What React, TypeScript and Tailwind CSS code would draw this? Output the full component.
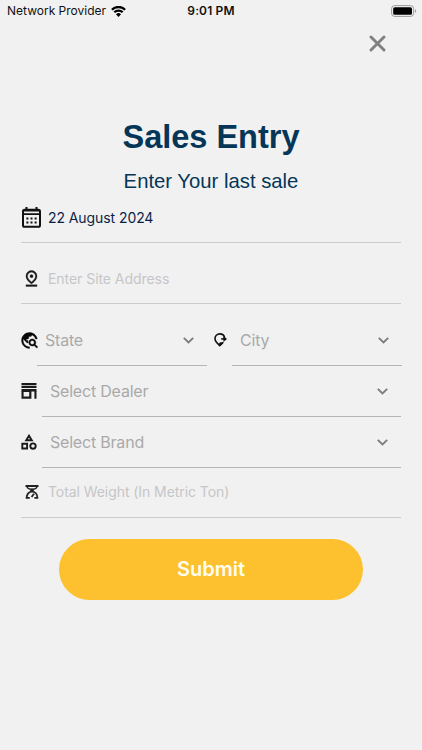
import React from "react";
import { MdOutlinePinDrop, MdTravelExplore } from "react-icons/md";

const sans = "font-['Inter','Liberation_Sans',sans-serif]";
const helv = "font-['Liberation_Sans',Arial,sans-serif]";

function Chevron() {
  return (
    <svg className="mt-[1px] h-[7px] w-[11px] shrink-0" viewBox="0 0 11 7" fill="none" stroke="#7d7d7d" strokeWidth="1.9">
      <path d="M.8 .9 5.5 5.5 10.2 .9" />
    </svg>
  );
}

function CalendarIcon() {
  return (
    <svg className="h-[21px] w-[19px] shrink-0" viewBox="0 0 19 21">
      <path d="M4.5 0v4M14.5 0v4" stroke="#111" strokeWidth="2" />
      <rect x="1" y="2.8" width="17" height="17" rx="1.6" fill="none" stroke="#111" strokeWidth="2" />
      <path d="M1 3.8h17M1 7.1h17" stroke="#111" strokeWidth="1.6" />
      <path d="M4.4 11.5h2M8.5 11.5h2M12.6 11.5h2M4.4 15.6h2M8.5 15.6h2M12.6 15.6h2" stroke="#111" strokeWidth="2" />
    </svg>
  );
}

function CityIcon() {
  return (
    <svg className="h-[14px] w-[13px] shrink-0" viewBox="0 0 13 14" fill="none" stroke="#111" strokeWidth="1.6">
      <path d="M10.6 4.5C10 2.300 8.100 .9 5.900 .9 3 .9 1 3 1 5.800c0 2.600 1.900 4.400 4.700 6.700 1.600-1.100 2.700-2.200 3.500-3.300" />
      <path d="M5.700 13.400 3.800 11.800l2.400-2.600 3.300.2z" fill="#111" stroke="none" />
      <path d="M7.200 5.900h3" />
      <path d="M9.400 2.900 13 5.900 9.400 8.900z" fill="#111" stroke="none" />
    </svg>
  );
}

function StoreIcon() {
  return (
    <svg className="h-[16px] w-[16px] shrink-0" viewBox="0 0 16 16" fill="#1b1b1b">
      <path d="M.5 0h15v2.200H.5zM.5 3.100h15v2H.5zM.5 6h15v2.500H.5z" />
      <path fillRule="evenodd" d="M.5 8h9.900v7.800H.5zM2.600 9v4.600h5.600V9zM13.400 8h2.100v7.800h-2.100z" />
    </svg>
  );
}

function BrandIcon() {
  return (
    <svg className="h-[16px] w-[16px] shrink-0" viewBox="0 0 16 16" fill="none" stroke="#1a1a1a" strokeWidth="1.9">
      <path d="M8 1.700 10.800 6.300H5.200z" />
      <path d="M1.300 9.700h4.800v4.800H1.300z" />
      <circle cx="12" cy="12.100" r="2.700" />
    </svg>
  );
}

function ScaleIcon() {
  return (
    <svg className="h-[14px] w-[14px] shrink-0" viewBox="0 0 14 14" fill="none" stroke="#222">
      <path d="M.5 1h13" strokeWidth="2" />
      <path d="M2 1.500c.3 2.200 2.300 2.700 5 2.700s4.700-.5 5-2.700" strokeWidth="1.5" />
      <path d="M7 3.800v3" strokeWidth="3.600" />
      <path d="M1.600 13.100C1.600 9.200 4 6.700 7 6.700s5.400 2.500 5.400 6.400" strokeWidth="1.800" />
      <path d="M.8 12.900h4M9.400 12.900h3.800" strokeWidth="1.800" />
      <path d="M6.600 12 9 8.800" strokeWidth="1.900" />
    </svg>
  );
}

function StatusBar() {
  return (
    <div className={`grid h-[22px] grid-cols-[1fr_auto_1fr] items-center pl-[7px] pr-[5px] text-[12px] text-[#111] ${sans}`}>
      <div className="flex items-center gap-[5px]">
        <span className="whitespace-nowrap text-[12px]">Network Provider</span>
        <svg className="h-[11px] w-[15px]" viewBox="0 0 15 11" fill="none" stroke="#000" strokeWidth="2.3">
          <path d="M.9 3.700a9.400 9.400 0 0 1 13.200 0M3.300 6.300a6 6 0 0 1 8.400 0" />
          <path d="M7.500 11 5 8.300a3.600 3.600 0 0 1 5 0z" fill="#000" stroke="none" />
        </svg>
      </div>
      <span className="ml-[-2px] whitespace-nowrap font-semibold tracking-[0.15px]">9:01 PM</span>
      <svg className="h-[12px] w-[26px] justify-self-end" viewBox="0 0 26 12">
        <rect x=".6" y=".6" width="22" height="10.800" rx="3" fill="none" stroke="#999" />
        <rect x="2.200" y="2.200" width="18.800" height="7.600" rx="1.600" fill="#000" />
        <path d="M24.200 4.200c1.300.5 1.300 3.100 0 3.600z" fill="#888" />
      </svg>
    </div>
  );
}

function InputRow({ icon, children, className }: { icon: React.ReactNode; children: React.ReactNode; className: string }) {
  return (
    <div className={`flex items-center border-b border-[#cbcbcb] ${className}`}>
      <span className="flex w-[27px] shrink-0 items-center">{icon}</span>
      {children}
    </div>
  );
}

function SelectRow({ icon, label, iconWidth, className = "" }: { icon: React.ReactNode; label: string; iconWidth: string; className?: string }) {
  return (
    <div className={`flex h-[51px] ${className}`}>
      <span className={`flex h-[51px] shrink-0 items-center ${iconWidth}`}>{icon}</span>
      <div className="flex flex-1 items-center justify-between border-b-[1.5px] border-[#b5b5b5] pl-[8px] pr-[13px] text-[16px] tracking-[-0.2px] text-[#a9a9a9]">
        <span>{label}</span>
        <Chevron />
      </div>
    </div>
  );
}

export default function App() {
  return (
    <main className={`h-[750px] w-[422px] overflow-hidden bg-[#f1f1f1] ${sans}`}>
      <StatusBar />
      <div className="flex h-[43px] justify-end pr-[36px] pt-[13px]">
        <svg className="h-[17px] w-[17px]" viewBox="0 0 17 17" stroke="#808080" strokeWidth="2.9" strokeLinecap="round">
          <path d="M2 2 15 15M15 2 2 15" />
        </svg>
      </div>
      <h1 className={`mt-[52px] text-center text-[32.5px] font-bold leading-[40px] text-[#053658] ${helv}`}>Sales Entry</h1>
      <p className={`mt-[11px] text-center text-[20.3px] leading-[26px] text-[#053658] ${helv}`}>Enter Your last sale</p>

      <form className="pl-[21px] pr-[21px]">
        <InputRow icon={<span className="ml-[1px]"><CalendarIcon /></span>} className="h-[49px] pb-[2px]">
          <span className="text-[14px] tracking-[-0.08px] text-[#0c1f47]">22 August 2024</span>
        </InputRow>
        <InputRow icon={<MdOutlinePinDrop className="ml-[1px] h-[19px] w-[19px] text-[#1a1a1a] [&>path]:stroke-[0.4] [&>path[fill=none]]:stroke-none" />} className="h-[61px] pt-[10px]">
          <span className="text-[14px] tracking-[-0.05px] text-[#c6c6c8]">Enter Site Address</span>
        </InputRow>
        <div className="mr-[-1px] flex pt-[10.5px]">
          <SelectRow className="w-[186px]" icon={<MdTravelExplore className="ml-[-1px] h-[19px] w-[19px] shrink-0 text-[#050505] [&>path]:stroke-[0.5] [&>path[fill=none]]:stroke-none" />} label="State" iconWidth="w-[16px]" />
          <SelectRow className="w-[195px]" icon={<CityIcon />} label="City" iconWidth="w-[25px] pl-[7px]" />
        </div>
        <SelectRow icon={<StoreIcon />} label="Select Dealer" iconWidth="w-[21px]" />
        <SelectRow icon={<BrandIcon />} label="Select Brand" iconWidth="w-[21px]" />
        <InputRow icon={<span className="ml-[4px]"><ScaleIcon /></span>} className="h-[50px] pb-[1px]">
          <span className="text-[14px] tracking-[-0.07px] text-[#c6c6c8]">Total Weight (In Metric Ton)</span>
        </InputRow>
        <button type="button" className="ml-[38px] mt-[21px] block h-[61px] w-[304px] rounded-full bg-[#fdc12f] text-[20px] font-semibold text-[#fffdf0]">
          Submit
        </button>
      </form>
    </main>
  );
}
